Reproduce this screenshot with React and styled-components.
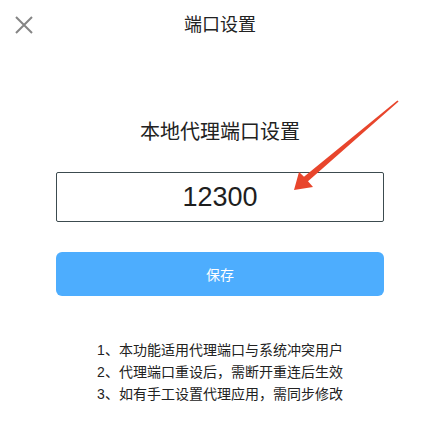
import React from "react";
import styled, { createGlobalStyle } from "styled-components";

const GlobalStyle = createGlobalStyle`
    html, body {
        margin: 0;
        padding: 0;
        background: #fff;
    }
    body {
        font-family: "Liberation Sans", "Noto Sans CJK SC", sans-serif;
        color: #222;
    }
`;

const Page = styled.div`
    position: relative;
    width: 440px;
    height: 436px;
    background: #fff;
    overflow: hidden;
`;

const Header = styled.header`
    display: grid;
    grid-template-columns: 48px 1fr 48px;
    align-items: center;
    height: 50px;
`;

const CloseButton = styled.button`
    display: flex;
    align-items: center;
    justify-content: center;
    width: 48px;
    height: 48px;
    padding: 0;
    border: none;
    background: none;
    cursor: pointer;
`;

const Title = styled.h1`
    margin: 0;
    text-align: center;
    font-size: 18px;
    font-weight: 400;
    line-height: 24px;
    color: #222;
`;

const Main = styled.main`
    display: flex;
    flex-direction: column;
    align-items: center;
    padding-top: 68px;
`;

const Subtitle = styled.h2`
    margin: 0;
    font-size: 20px;
    font-weight: 400;
    line-height: 28px;
    color: #222;
`;

const PortInput = styled.input`
    box-sizing: border-box;
    width: 328px;
    height: 50px;
    margin-top: 26px;
    border: 1px solid #3c4b4f;
    border-radius: 2px;
    text-align: center;
    font-family: "Liberation Sans", sans-serif;
    font-size: 27px;
    color: #1e1e1e;
    outline: none;
`;

const SaveButton = styled.button`
    width: 328px;
    height: 44px;
    margin-top: 30px;
    border: none;
    border-radius: 6px;
    background: #4dadfe;
    color: #fff;
    font-family: "Liberation Sans", "Noto Sans CJK SC", sans-serif;
    font-size: 14px;
    cursor: pointer;
`;

const Notes = styled.ol`
    margin: 43px 0 0;
    padding: 0;
    list-style: none;
    text-align: center;
`;

const Note = styled.li`
    font-size: 14px;
    line-height: 22px;
    color: #222;
`;

const Annotation = styled.svg`
    position: absolute;
    left: 0;
    top: 0;
    pointer-events: none;
`;

const notes = [
    "1、本功能适用代理端口与系统冲突用户",
    "2、代理端口重设后，需断开重连后生效",
    "3、如有手工设置代理应用，需同步修改",
];

export default function App() {
    return <Page>
        <GlobalStyle />
        <Header>
            <CloseButton aria-label="关闭">
                <svg width="18" height="18" viewBox="0 0 18 18">
                    <path d="M1 1 L17 17 M17 1 L1 17" stroke="#858585" strokeWidth="2" />
                </svg>
            </CloseButton>
            <Title>端口设置</Title>
            <span />
        </Header>
        <Main>
            <Subtitle>本地代理端口设置</Subtitle>
            <PortInput defaultValue="12300" />
            <SaveButton>保存</SaveButton>
            <Notes>
                {notes.map(n => <Note key={n}>{n}</Note>)}
            </Notes>
        </Main>
        <Annotation width="440" height="436" viewBox="0 0 440 436">
            <polygon
                points="294,190 299,172 304,176.7 397.4,100.4 398.6,101.6 308,181.3 313,187"
                fill="#e8452c"
            />
        </Annotation>
    </Page>
};
